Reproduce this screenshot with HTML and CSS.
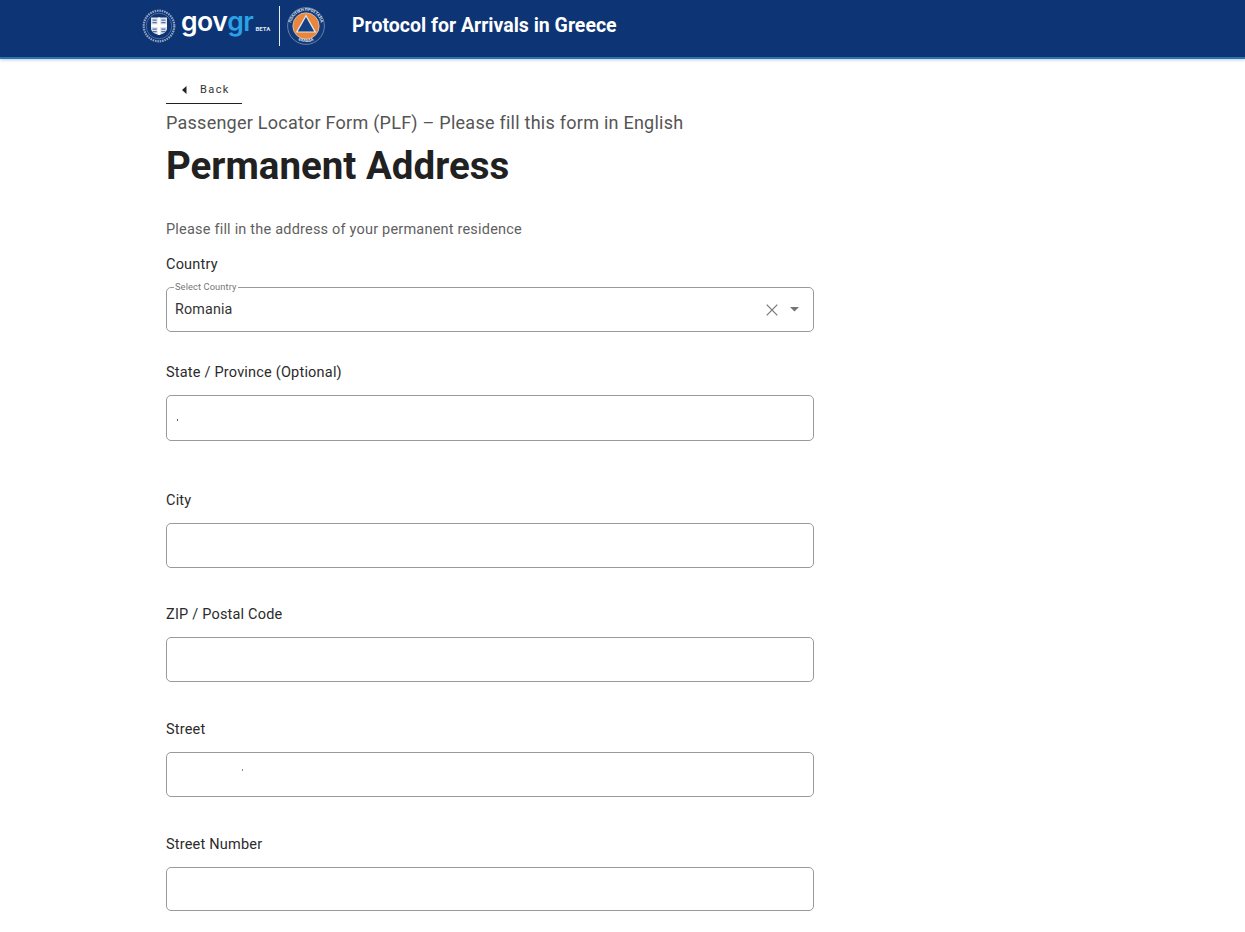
FILE: index.html
```html
<!DOCTYPE html>
<html lang="en">

<head>
  <meta charset="UTF-8">
  <meta name="viewport" content="width=device-width, initial-scale=1.0">
  <title>Protocol for Arrivals in Greece</title>
  <link rel="stylesheet" href="styles.css">
</head>

<body>
  <header class="topbar">
    <div class="topbar-inner">
      <svg class="emblem" width="34" height="34" viewBox="0 0 34 34" aria-hidden="true">
        <circle cx="17" cy="17" r="15.300" fill="none" stroke="#8fa3c4" stroke-width="2.200" stroke-dasharray="1.600 .8"/>
        <circle cx="17" cy="17" r="12.800" fill="none" stroke="#5f7aa6" stroke-width=".8"/>
        <path d="M9 8.500h16v11c0 3.500-4 5.500-8 6.500-4-1-8-3-8-6.500z" fill="#dde3ed"/>
        <path d="M10.500 10.500h4.200v1.300h-4.200zM10.500 13h4.200v1.300h-4.200zM19.300 10.500h4.200v1.300h-4.200zM19.300 13h4.200v1.300h-4.200zM10.500 19.500h4.200v1.300h-4.200zM10.500 22h4.200v1.300h-4.200zM19.300 19.500h4.200v1.300h-4.200zM19.300 22h4.200v1.300h-4.200z" fill="#54709e"/>
        <path d="M15.800 8.500h2.400v7h6.800v2.400h-6.800V26h-2.400v-8.100H9v-2.400h6.800z" fill="#fff"/>
      </svg>
      <div class="brand"><span class="brand-gov">gov</span><span class="brand-gr">gr</span><span class="brand-beta">BETA</span></div>
      <div class="topbar-divider"></div>
      <svg class="emblem" width="38" height="38" viewBox="0 0 38 38" aria-hidden="true">
        <circle cx="19" cy="19" r="18.400" fill="#123a78" stroke="#7d93b8" stroke-width=".8"/>
        <circle cx="19" cy="19" r="13.200" fill="#e8863c" stroke="#dfe6f0" stroke-width=".6"/>
        <path d="M19 7.500 29.300 25.500H8.700z" fill="#dfe6f0"/>
        <path d="M19 10 27.200 24.400H10.800z" fill="#143f80"/>
        <defs>
          <path id="arcTop" d="M3.800 19a15.200 15.200 0 0 1 30.400 0"/>
          <path id="arcBottom" d="M6.500 29a16 16 0 0 0 25 0"/>
        </defs>
        <text class="emblem-text"><textPath href="#arcTop" startOffset="50%" text-anchor="middle">ΠΟΛΙΤΙΚΗ ΠΡΟΣΤΑΣΙΑ</textPath></text>
        <text class="emblem-text"><textPath href="#arcBottom" startOffset="50%" text-anchor="middle">ΕΛΛΑΔΑ</textPath></text>
      </svg>
      <div class="topbar-title">Protocol for Arrivals in Greece</div>
    </div>
  </header>

  <main class="container">
    <button class="back-btn">
      <svg width="5" height="8" viewBox="0 0 5 8" aria-hidden="true"><path d="M4.500 0v8L0 4z" fill="#222"/></svg>
      <span>Back</span>
    </button>

    <p class="subtitle">Passenger Locator Form (PLF) – Please fill this form in English</p>
    <h1>Permanent Address</h1>
    <p class="intro">Please fill in the address of your permanent residence</p>

    <div class="field field-first">
      <label class="field-label">Country</label>
      <fieldset class="select-box">
        <legend>Select Country</legend>
        <span class="select-value">Romania</span>
        <svg class="clear-icon" width="12" height="12" viewBox="0 0 12 12" aria-hidden="true"><path d="M.7.7l10.600 10.600M11.300.7.7 11.300" stroke="#757575" stroke-width="1.200" fill="none"/></svg>
        <svg class="caret-icon" width="9" height="5" viewBox="0 0 9 5" aria-hidden="true"><path d="M0 0h9L4.500 4.500z" fill="#757575"/></svg>
      </fieldset>
    </div>

    <div class="field field-state">
      <label class="field-label">State / Province (Optional)</label>
      <input class="text-input text-input-tall speck-state" type="text">
    </div>

    <div class="field field-after-state">
      <label class="field-label">City</label>
      <input class="text-input" type="text">
    </div>

    <div class="field">
      <label class="field-label">ZIP / Postal Code</label>
      <input class="text-input" type="text">
    </div>

    <div class="field field-loose">
      <label class="field-label">Street</label>
      <input class="text-input speck-street" type="text">
    </div>

    <div class="field field-loose">
      <label class="field-label">Street Number</label>
      <input class="text-input text-input-short" type="text">
    </div>
  </main>
</body>

</html>
```

FILE: styles.css
```css
* {
  box-sizing: border-box;
}

body {
  font-family: 'Roboto', sans-serif;
  background: #fff;
  margin: 0;
  color: #212121;
}

.topbar {
  height: 59px;
  background: #0d3475;
  border-bottom: 2px solid #2f74ac;
  box-shadow: 0 1px 3px rgba(47, 116, 172, 0.35);
}

.topbar-inner {
  display: flex;
  align-items: center;
  height: 57px;
  padding: 0 0 6px 142px;
}

.emblem {
  flex: none;
}

.brand {
  display: flex;
  align-items: baseline;
  width: 88px;
  margin: 0 0 2px 5px;
  font-family: 'Inter', sans-serif;
  font-weight: 600;
  font-size: 26.500px;
  line-height: 30px;
  letter-spacing: -0.500px;
}

.brand-gov {
  color: #fff;
}

.brand-gr {
  color: #2aa3e6;
}

.brand-beta {
  margin-left: 2px;
  font-family: 'Roboto', sans-serif;
  font-weight: 700;
  font-size: 6px;
  letter-spacing: 0.100px;
  color: #dfe7f2;
}

.topbar-divider {
  width: 1px;
  height: 40px;
  margin: 0 7px 0 10px;
  background: #e6ebf3;
}

.emblem-text {
  font-family: 'Roboto', sans-serif;
  font-size: 4px;
  font-weight: 700;
  fill: #e4eaf3;
}

.topbar-title {
  margin-left: 27px;
  font-size: 19.500px;
  font-weight: 700;
  color: #fff;
}

.container {
  width: 648px;
  margin-left: 166px;
  padding-bottom: 21px;
}

.back-btn {
  display: flex;
  align-items: center;
  width: 76px;
  height: 30px;
  margin-top: 15px;
  padding: 2px 0 0 16px;
  background: none;
  border: none;
  border-bottom: 1px solid #212121;
  font-family: 'Roboto', sans-serif;
  font-size: 11px;
  letter-spacing: 1.400px;
  color: #333;
}

.back-btn span {
  margin-left: 13px;
}

.subtitle {
  margin: 8px 0 0;
  font-size: 18px;
  line-height: 22px;
  letter-spacing: 0.250px;
  color: #555;
}

h1 {
  margin: 8px 0 0;
  font-size: 38.500px;
  line-height: 47px;
  font-weight: 700;
  color: #212121;
}

.intro {
  margin: 31px 0 0;
  font-size: 14.500px;
  line-height: 20px;
  letter-spacing: 0.200px;
  color: #5f5f5f;
}

.field {
  margin-top: 35px;
}

.field-first {
  margin-top: 14px;
}

.field-state {
  margin-top: 29px;
}

.field-after-state {
  margin-top: 48px;
}

.field-loose {
  margin-top: 36px;
}

.field-label {
  display: block;
  height: 20px;
  margin-bottom: 14px;
  font-size: 14.500px;
  line-height: 23px;
  letter-spacing: 0.200px;
  color: #2b2b2b;
}

.field-first .field-label {
  line-height: 21px;
}

.select-box {
  display: flex;
  align-items: center;
  height: 50px;
  margin: -6px 0 0;
  padding: 0 14px 0 8px;
  border: 1px solid #9a9a9a;
  border-radius: 5px;
}

.select-box legend {
  margin-left: -1px;
  padding: 0 1px;
  font-size: 9.300px;
  line-height: 10px;
  letter-spacing: 0.100px;
  color: #777;
}

.select-value {
  flex: 1;
  margin-top: -5px;
  font-size: 14.300px;
  letter-spacing: 0.150px;
  color: #333;
}

.clear-icon {
  margin-top: -4px;
}

.caret-icon {
  margin: -4px 0 0 12px;
}

.text-input {
  display: block;
  width: 100%;
  height: 45px;
  background: #fff;
  border: 1px solid #9a9a9a;
  border-radius: 5px;
  outline: none;
}

.text-input-tall {
  height: 46px;
}

.text-input-short {
  height: 44px;
}

/* stray marks left in the blanked out inputs */
.speck-state {
  background: linear-gradient(#666, #666) 10px 23px / 1px 2px no-repeat #fff;
}

.speck-street {
  background: linear-gradient(#888, #888) 75px 16px / 1px 2px no-repeat #fff;
}
```
